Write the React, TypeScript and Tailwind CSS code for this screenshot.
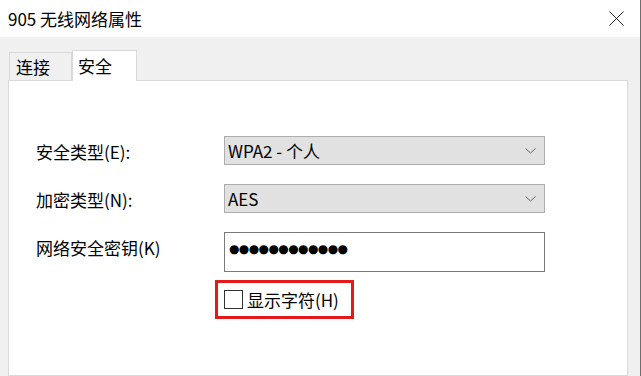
const font = { fontFamily: '"Noto Sans CJK SC", "Noto Sans", sans-serif' };

function Chevron() {
  return (
    <svg width="11" height="6" viewBox="0 0 11 6" className="text-[#606060]">
      <path d="M0.5 0.5 L5.5 5 L10.5 0.5" fill="none" stroke="currentColor" strokeWidth="1" />
    </svg>
  );
}

function Select({ value }: { value: string }) {
  return (
    <div className="flex items-center justify-between w-[321px] h-[29px] bg-[#e1e1e1] border border-[#adadad] pl-[3px] pr-[8px]">
      <span className="text-[17px] leading-none text-black">{value}</span>
      <Chevron />
    </div>
  );
}

export default function App() {
  return (
    <div
      className="w-[641px] h-[376px] overflow-hidden flex flex-col border-r border-[#6e6e6e] bg-[#f0f0f0] text-black"
      style={font}
    >
      <div className="h-[37px] shrink-0 bg-white flex items-center justify-between pl-[8px] pr-[16px]">
        <span className="text-[17px] leading-none">905 无线网络属性</span>
        <svg width="15" height="15" viewBox="0 0 15 15">
          <path d="M0.5 0.5 L14.5 14.5 M14.5 0.5 L0.5 14.5" stroke="#222" strokeWidth="1" />
        </svg>
      </div>

      <div className="flex-1 flex flex-col pt-[12px] pl-[8px] pr-[12px]">
        <div className="flex items-end h-[31px] pl-[1px] shrink-0">
          <div className="h-[28px] w-[63px] border border-b-0 border-[#d9d9d9] bg-[#f0f0f0] flex items-center pl-[6px] text-[17px] leading-none">
            连接
          </div>
          <div className="h-[31px] w-[65px] -mb-px relative z-10 border border-b-0 border-[#d9d9d9] bg-white flex items-center pl-[5px] pb-[2px] text-[17px] leading-none">
            安全
          </div>
        </div>

        <div className="flex-1 bg-white border border-[#d9d9d9] pl-[27px] pt-[55px]">
          <div className="flex items-start">
            <div className="w-[188px] h-[29px] pt-[2px] flex items-center text-[17px] leading-none">安全类型(E):</div>
            <Select value="WPA2 - 个人" />
          </div>

          <div className="flex items-start mt-[19px]">
            <div className="w-[188px] h-[29px] pt-[2px] flex items-center text-[17px] leading-none">加密类型(N):</div>
            <Select value="AES" />
          </div>

          <div className="flex items-start mt-[19px]">
            <div className="w-[188px] h-[29px] pt-[2px] flex items-center text-[17px] leading-none">网络安全密钥(K)</div>
            <div className="w-[321px] h-[40px] border border-[#7a7a7a] bg-white flex items-center pl-[4px] pb-[6px]">
              <span className="text-[12px] leading-none tracking-[-0.6px]" style={{ fontFamily: '"DejaVu Sans", sans-serif' }}>
                ●●●●●●●●●●●●
              </span>
            </div>
          </div>

          <div className="ml-[179px] mt-[8px] w-[139px] h-[39px] border-[3px] border-[#e3191c] flex items-center pl-[6px] gap-[4px]">
            <div className="w-[19px] h-[19px] border border-[#333333] bg-white" />
            <span className="text-[17px] leading-none">显示字符(H)</span>
          </div>
        </div>
      </div>
    </div>
  );
}
